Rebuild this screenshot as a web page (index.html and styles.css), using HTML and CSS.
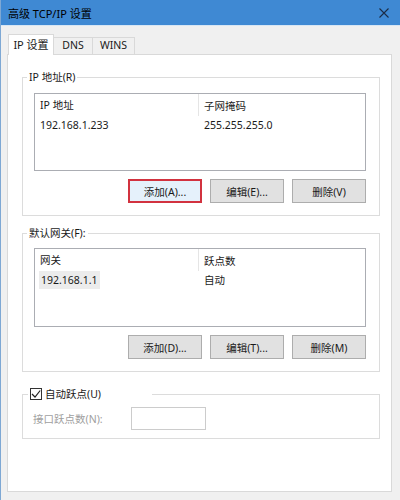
FILE: index.html
```html
<!doctype html>
<html>

<head>
<meta charset="utf-8" />
<title>高级 TCP/IP 设置</title>
<link rel="stylesheet" href="styles.css">
</head>

<body>
<div class="window">

	<div class="titlebar">
		<span class="title">高级 TCP/IP 设置</span>
		<svg class="close" width="10" height="10" viewBox="0 0 10 10">
			<path d="M0.5 0.5 L9.5 9.5 M9.5 0.5 L0.5 9.5" stroke="#1c2c45" stroke-width="1.1" fill="none" />
		</svg>
	</div>

	<div class="client">
		<div class="tabs">
			<div class="tab active">IP 设置</div>
			<div class="tab">DNS</div>
			<div class="tab">WINS</div>
		</div>

		<div class="panel">

			<fieldset class="group group-ip">
				<legend>IP 地址(R)</legend>
				<div class="group-body">
					<div class="list">
						<div class="list-head"><span>IP 地址</span><span>子网掩码</span></div>
						<div class="list-row"><span>192.168.1.233</span><span>255.255.255.0</span></div>
					</div>
					<div class="buttons">
						<button class="btn focus">添加(A)...</button>
						<button class="btn">编辑(E)...</button>
						<button class="btn">删除(V)</button>
					</div>
				</div>
			</fieldset>

			<fieldset class="group group-gw">
				<legend>默认网关(F):</legend>
				<div class="group-body">
					<div class="list">
						<div class="list-head"><span>网关</span><span>跃点数</span></div>
						<div class="list-row"><span><em class="sel">192.168.1.1</em></span><span>自动</span></div>
					</div>
					<div class="buttons">
						<button class="btn">添加(D)...</button>
						<button class="btn">编辑(T)...</button>
						<button class="btn">删除(M)</button>
					</div>
				</div>
			</fieldset>

			<fieldset class="group group-metric">
				<legend>
					<span class="check">
						<svg width="10" height="10" viewBox="0 0 10 10">
							<path d="M1 5 L4 8 L9.2 1.5" stroke="#222" stroke-width="1.2" fill="none" />
						</svg>
					</span>
					自动跃点(U)
				</legend>
				<div class="group-body">
					<div class="field">
						<label>接口跃点数(N):</label>
						<span class="input"></span>
					</div>
				</div>
			</fieldset>

		</div>
	</div>

</div>
</body>

</html>
```

FILE: styles.css
```css
* {
	margin: 0;
	padding: 0;
	box-sizing: border-box;
}
html, body {
	width: 100%;
	height: 100%;
	overflow: hidden;
}
body {
	font-family: "Noto Sans", "Noto Sans CJK SC", sans-serif;
	font-size: 10.5px;
	color: #1a1a1a;
	background: #f0f0f0;
}
.window {
	height: 500px;
	border-left: 1px solid #7ea8d4;
}

/* title bar */
.titlebar {
	height: 26px;
	background: #3f89d3;
	border-bottom: 1px solid #d7e6f4;
	display: flex;
	align-items: center;
	justify-content: space-between;
	padding: 0 11px 0 7px;
	font-size: 11px;
	color: #000;
}

/* tabs + page */
.client {
	padding: 8px 8px 0 6px;
}
.tabs {
	display: flex;
	align-items: flex-end;
	padding-left: 1px;
	margin-bottom: -1px;
	position: relative;
	z-index: 1;
}
.tab {
	min-width: 40px;
	height: 17px;
	line-height: 15px;
	margin-bottom: 1px;
	margin-left: -1px;
	padding: 0 7px;
	border: 1px solid #d9d9d9;
	border-bottom: none;
	background: #f0f0f0;
	text-align: center;
}
.tab.active {
	width: 46px;
	height: 21px;
	line-height: 19px;
	margin-bottom: 0;
	margin-left: 0;
	padding: 0;
	background: #fff;
	font-size: 11px;
}
.panel {
	height: 438px;
	background: #fff;
	border: 1px solid #d9d9d9;
	padding: 14px 11px 0 14px;
}

/* group boxes */
.group {
	border: 1px solid #dcdcdc;
	min-width: 0;
}
.group legend {
	margin-left: 4px;
	padding: 0 2px;
	line-height: 16px;
}
.group-body {
	padding: 8px 13px 12px 11px;
}
.group-gw {
	margin-top: 9px;
}
.group-gw .group-body {
	padding-top: 7px;
}
.group-metric {
	margin-top: 12px;
}
.group-metric legend {
	display: flex;
	align-items: center;
	gap: 3px;
	width: 124px;
	margin-left: 5px;
	line-height: 20px;
}
.group-metric .group-body {
	padding: 3px 10px 8px 10px;
}

/* list views */
.list {
	height: 78px;
	border: 1px solid #abadb3;
}
.group-gw .list {
	height: 79px;
}
.list-head, .list-row {
	display: grid;
	grid-template-columns: 164px 1fr;
}
.list-head {
	height: 22px;
	align-items: center;
}
.list-head span:first-child {
	border-right: 1px solid #e5e5e5;
	height: 22px;
	line-height: 22px;
}
.list-head span, .list-row span {
	padding-left: 5px;
}
.list-row {
	height: 18px;
	line-height: 18px;
}
.sel {
	font-style: normal;
	display: inline-block;
	margin-left: -1px;
	padding: 0 2px;
	background: #ececec;
}

/* buttons */
.buttons {
	display: flex;
	justify-content: flex-end;
	gap: 8px;
	margin-top: 8px;
}
.btn {
	width: 74px;
	height: 24px;
	font: inherit;
	color: #1a1a1a;
	background: #e1e1e1;
	border: 1px solid #adadad;
}
.btn.focus {
	background: #e5f1fb;
	border: 2px solid #d2323f;
}

/* checkbox + disabled field */
.check {
	width: 12px;
	height: 12px;
	border: 1px solid #333;
	display: flex;
	align-items: center;
	justify-content: center;
	background: #fff;
}
.field {
	display: flex;
	align-items: center;
}
.field label {
	width: 98px;
	color: #a0a0a0;
}
.input {
	width: 75px;
	height: 23px;
	border: 1px solid #cccccc;
}
```
